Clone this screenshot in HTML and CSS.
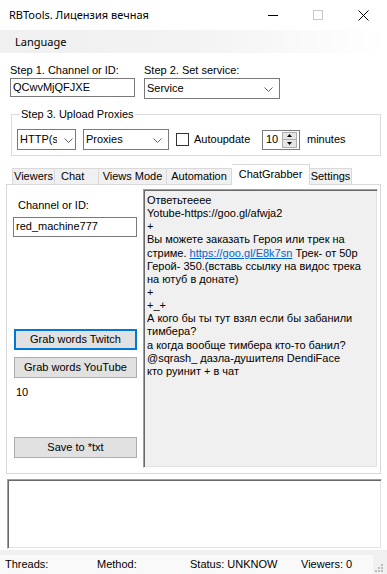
FILE: index.html
```html
<!DOCTYPE html>
<html>
<head>
<meta charset="utf-8">
<link rel="stylesheet" href="styles.css">
</head>
<body>
<div class="titlebar">
  <div class="title">RBTools. Лицензия вечная</div>
  <div class="winbtn"><svg width="10" height="10" viewBox="0 0 10 10"><line x1="0" y1="5.5" x2="10" y2="5.5" stroke="#000" stroke-width="1"/></svg></div>
  <div class="winbtn"><svg width="10" height="10" viewBox="0 0 10 10"><rect x="0.5" y="0.5" width="9" height="9" fill="none" stroke="#c8c8c8" stroke-width="1"/></svg></div>
  <div class="winbtn"><svg width="11" height="11" viewBox="0 0 11 11"><path d="M0.5,0.5 L10.5,10.5 M10.5,0.5 L0.5,10.5" stroke="#000" stroke-width="1"/></svg></div>
</div>
<div class="menubar"><span class="menu-item">Language</span></div>

<div class="steps">
  <div class="field field-channel">
    <div class="label">Step 1. Channel or ID:</div>
    <div class="textbox">QCwvMjQFJXE</div>
  </div>
  <div class="field field-service">
    <div class="label">Step 2. Set service:</div>
    <div class="combo combo-service"><span class="combo-text">Service</span><svg class="chev" width="9" height="5" viewBox="0 0 9 5"><polyline points="0.5,0.5 4.5,4.5 8.5,0.5" fill="none" stroke="#606060" stroke-width="1"/></svg></div>
  </div>
</div>

<fieldset class="group">
  <legend class="group-title">Step 3. Upload Proxies</legend>
  <div class="proxy-row">
    <div class="combo combo-http"><span class="combo-text">HTTP(s)</span><svg class="chev" width="9" height="5" viewBox="0 0 9 5"><polyline points="0.5,0.5 4.5,4.5 8.5,0.5" fill="none" stroke="#606060" stroke-width="1"/></svg></div>
    <div class="combo combo-proxies"><span class="combo-text">Proxies</span><svg class="chev" width="9" height="5" viewBox="0 0 9 5"><polyline points="0.5,0.5 4.5,4.5 8.5,0.5" fill="none" stroke="#606060" stroke-width="1"/></svg></div>
    <div class="checkbox"></div>
    <span class="check-label">Autoupdate</span>
    <div class="numeric">
      <span class="numeric-text">10</span>
      <div class="spin">
        <div class="spin-btn"><svg width="5" height="3" viewBox="0 0 5 3"><polygon points="0,3 2.5,0 5,3" fill="#000"/></svg></div>
        <div class="spin-btn"><svg width="5" height="3" viewBox="0 0 5 3"><polygon points="0,0 2.5,3 5,0" fill="#000"/></svg></div>
      </div>
    </div>
    <span class="minutes">minutes</span>
  </div>
</fieldset>

<div class="tabs">
  <div class="tab tab-viewers">Viewers</div>
  <div class="tab tab-chat">Chat</div>
  <div class="tab tab-views">Views Mode</div>
  <div class="tab tab-auto">Automation</div>
  <div class="tab tab-grabber tab-active">ChatGrabber</div>
  <div class="tab tab-settings">Settings</div>
</div>
<div class="panel">
  <div class="left-col">
    <div class="panel-label">Channel or ID:</div>
    <div class="textbox textbox-channel">red_machine777</div>
    <div class="btn btn-default btn-twitch">Grab words Twitch</div>
    <div class="btn btn-youtube">Grab words YouTube</div>
    <div class="count">10</div>
    <div class="btn btn-save">Save to *txt</div>
  </div>
  <div class="rich">
    <div class="line">Ответьтееее</div>
    <div class="line">Yotube-https://goo.gl/afwja2</div>
    <div class="line">+</div>
    <div class="line">Вы можете заказать Героя или трек на</div>
    <div class="line">стриме. <span class="link">https://goo.gl/E8k7sn</span> Трек- от 50р</div>
    <div class="line">Герой- 350.(вставь ссылку на видос трека</div>
    <div class="line">на ютуб в донате)</div>
    <div class="line">+</div>
    <div class="line">+_+</div>
    <div class="line">А кого бы ты тут взял если бы забанили</div>
    <div class="line">тимбера?</div>
    <div class="line">а когда вообще тимбера кто-то банил?</div>
    <div class="line">@sqrash_ дазла-душителя DendiFace</div>
    <div class="line">кто руинит + в чат</div>
  </div>
</div>

<div class="log"></div>

<div class="statusbar">
  <div class="status-items">
    <span class="status status-threads">Threads:</span>
    <span class="status status-method">Method:</span>
    <span class="status status-state">Status: UNKNOW</span>
    <span class="status status-viewers">Viewers: 0</span>
  </div>
  <div class="grip">
    <svg width="10" height="10" viewBox="0 0 10 10">
      <rect x="8" y="2" width="2" height="2" fill="#bdbdbd"/>
      <rect x="5" y="5" width="2" height="2" fill="#bdbdbd"/>
      <rect x="8" y="5" width="2" height="2" fill="#bdbdbd"/>
      <rect x="2" y="8" width="2" height="2" fill="#bdbdbd"/>
      <rect x="5" y="8" width="2" height="2" fill="#bdbdbd"/>
      <rect x="8" y="8" width="2" height="2" fill="#bdbdbd"/>
    </svg>
  </div>
</div>
</body>
</html>
```

FILE: styles.css
```css
* { box-sizing: border-box; margin: 0; padding: 0; }

body {
  width: 387px;
  height: 574px;
  overflow: hidden;
  background: #fff;
  font-family: "Liberation Sans", Arial, sans-serif;
  font-size: 11px;
  line-height: 13px;
  color: #000;
}

.titlebar {
  height: 30px;
  display: flex;
  align-items: center;
  font-family: "Noto Sans", "Open Sans", sans-serif;
  font-size: 11px;
}
.title { flex: 1; padding-left: 9px; padding-bottom: 1px; }
.winbtn {
  width: 45px;
  height: 30px;
  display: flex;
  align-items: center;
  justify-content: center;
}
.winbtn:last-child { width: 47px; }

.menubar {
  height: 23px;
  display: flex;
  align-items: center;
  background: linear-gradient(to right, #f0f0f0 0%, #f3f3f3 50%, #ffffff 100%);
  font-family: "Noto Sans", "Open Sans", sans-serif;
  font-size: 11px;
}
.menu-item { padding-left: 15px; }

.steps {
  display: flex;
  margin-top: 11px;
  padding-left: 10px;
}
.field-channel { width: 125px; }
.field-service { width: 136px; margin-left: 9px; }
.label { height: 13px; margin-bottom: 1px; }

.textbox {
  height: 19px;
  border: 1px solid #7a7a7a;
  background: #fff;
  padding: 2px 2px 0;
  white-space: nowrap;
  overflow: hidden;
}

.combo {
  height: 21px;
  border: 1px solid #7a7a7a;
  background: #fff;
  display: flex;
  align-items: center;
  padding-left: 2px;
  padding-right: 6px;
}
.combo-text { flex: 1; white-space: nowrap; overflow: hidden; }
.chev { flex: none; margin-left: 3px; margin-top: 1px; }

.group {
  margin: 9px 6px 0 11px;
  border: 1px solid #dcdcdc;
  padding: 0 0 5px 5px;
}
.group-title {
  margin-left: 3px;
  padding: 0 1px;
  line-height: 13px;
}
.proxy-row {
  display: flex;
  align-items: center;
  margin-top: 8px;
  height: 21px;
}
.combo-http { width: 59px; padding-right: 4px; }
.combo-http .combo-text { width: 37px; flex: none; margin-right: 4px; }
.combo-proxies { width: 86px; margin-left: 7px; }
.checkbox {
  width: 13px;
  height: 13px;
  border: 1px solid #333;
  background: #fff;
  margin-left: 7px;
}
.check-label { width: 68px; margin-left: 5px; }
.numeric {
  width: 38px;
  height: 20px;
  border: 1px solid #7a7a7a;
  background: #fff;
  display: flex;
  align-items: center;
  padding: 1px;
}
.numeric-text { flex: 1; padding-left: 2px; }
.spin {
  width: 15px;
  height: 16px;
  display: flex;
  flex-direction: column;
  border: 1px solid #adadad;
  background: #e5e5e5;
  margin-right: 1px;
}
.spin-btn {
  flex: 1;
  display: flex;
  align-items: center;
  justify-content: center;
}
.spin-btn + .spin-btn { border-top: 1px solid #adadad; }
.minutes { margin-left: 7px; }

.tabs {
  display: flex;
  align-items: flex-end;
  height: 20px;
  margin: 8px 6px 0;
  padding-left: 6px;
}
.tab {
  height: 16px;
  display: flex;
  align-items: center;
  justify-content: center;
  background: #f0f0f0;
  border: 1px solid #d9d9d9;
  border-bottom: none;
  white-space: nowrap;
}
.tab + .tab { border-left: none; }
.tab-viewers { width: 43px; }
.tab-chat { width: 44px; justify-content: flex-start; padding-left: 6px; }
.tab-views { width: 68px; }
.tab-auto { width: 65px; }
.tab-grabber { width: 78px; }
.tab-settings { width: 42px; }
.tab-active {
  height: 21px;
  margin-bottom: -1px;
  background: #fff;
  border-left: 1px solid #d9d9d9;
  position: relative;
  z-index: 1;
  padding-bottom: 2px;
}
.tab-active + .tab { border-left: none; }

.panel {
  height: 290px;
  margin: 0 6px;
  border: 1px solid #d9d9d9;
  background: #fff;
  display: flex;
}
.left-col {
  width: 136px;
  flex: none;
  display: flex;
  flex-direction: column;
}
.panel-label { margin: 14px 0 0 11px; height: 13px; }
.textbox-channel { margin: 5px 0 0 6px; width: 124px; height: 20px; }
.btn {
  height: 21px;
  width: 123px;
  margin-left: 7px;
  background: #e1e1e1;
  border: 1px solid #adadad;
  display: flex;
  align-items: center;
  justify-content: center;
  white-space: nowrap;
}
.btn-default { border: 2px solid #0078d7; }
.btn-twitch { margin-top: 92px; }
.btn-youtube { margin-top: 7px; }
.count { margin: 8px 0 0 9px; height: 13px; }
.btn-save { margin-top: 38px; }

.rich {
  width: 235px;
  height: 279px;
  margin-top: 4px;
  background: #f0f0f0;
  border-top: 1px solid #a0a0a0;
  border-left: 1px solid #a0a0a0;
  border-right: 1px solid #ffffff;
  border-bottom: 1px solid #ffffff;
  box-shadow: inset 1px 1px 0 #696969, inset -1px -1px 0 #e3e3e3;
  padding: 4px 0 0 3px;
  overflow: hidden;
}
.line { white-space: nowrap; height: 13.15px; line-height: 13px; }
.link { color: #0066cc; text-decoration: underline; }

.log {
  height: 70px;
  margin: 5px 5px 0 7px;
  background: #fff;
  border-top: 1px solid #a0a0a0;
  border-left: 1px solid #a0a0a0;
  border-right: 1px solid #ffffff;
  border-bottom: 1px solid #ffffff;
  box-shadow: inset 1px 1px 0 #696969, inset -1px -1px 0 #e3e3e3;
}

.statusbar {
  height: 24px;
  margin-top: 1px;
  background: #f0f0f0;
  display: flex;
  padding-top: 5px;
}
.status-items {
  flex: 1;
  display: flex;
  align-items: center;
  background: #f9f9f9;
  padding-left: 5px;
}
.status-threads { width: 92px; }
.status-method { width: 93px; }
.status-state { width: 111px; }
.grip {
  width: 14px;
  display: flex;
  align-items: flex-end;
  justify-content: flex-start;
  padding-bottom: 2px;
}
```
